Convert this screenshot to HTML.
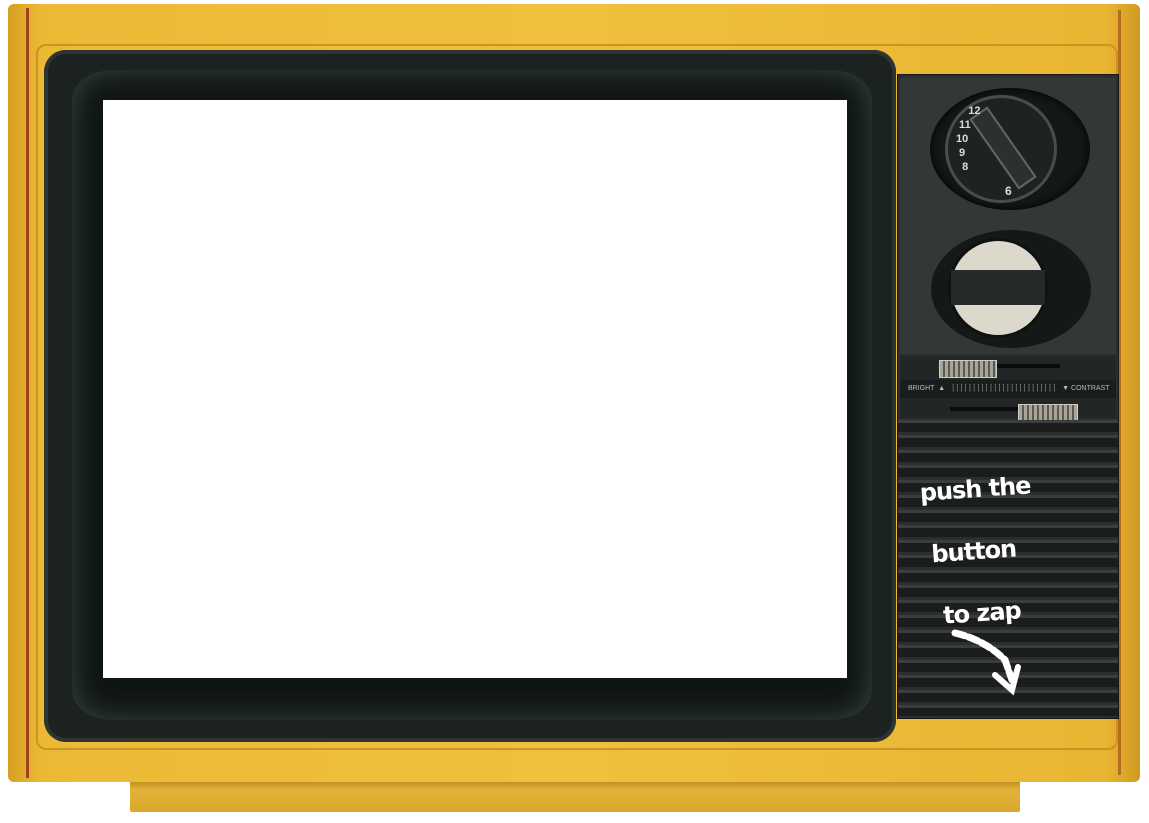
<!DOCTYPE html>
<html><head><style>
body{margin:0;width:1149px;height:823px;background:#fff;position:relative;overflow:hidden;font-family:"Liberation Sans",sans-serif}
div{position:absolute;box-sizing:border-box}
</style></head><body>
<div style="left:130px;top:780px;width:890px;height:32px;background:linear-gradient(#b58a1e,#e2b237 30%,#d9a72c);border-radius:2px"></div>
<div style="left:8px;top:4px;width:1132px;height:778px;background:linear-gradient(90deg,#d89f22,#ecb935 3%,#f0c03c 50%,#e9b532 97%,#d19a22);border-radius:6px"></div>
<div style="left:26px;top:8px;width:3px;height:770px;background:#a0401c"></div>
<div style="left:1118px;top:10px;width:3px;height:765px;background:#b86a1e"></div>
<div style="left:36px;top:44px;width:1082px;height:706px;border:2px solid #c99520;border-radius:10px"></div>
<div style="left:44px;top:50px;width:852px;height:692px;background:#1b2220;border-radius:22px;box-shadow:inset 0 0 0 4px #2c3532"></div>
<div style="left:72px;top:70px;width:800px;height:650px;background:#0f1514;border-radius:40px/30px;box-shadow:inset 0 0 30px #3b4744"></div>
<div style="left:103px;top:100px;width:744px;height:578px;background:#fff"></div>
<div style="left:897px;top:74px;width:222px;height:645px;background:#2b2f2e;border:1px solid #151817"></div>
<div style="left:900px;top:78px;width:216px;height:276px;background:#333837"></div>
<div style="left:930px;top:88px;width:160px;height:122px;border-radius:50%;background:#141817;box-shadow:inset 0 0 10px #000"></div>
<div style="left:945px;top:95px;width:112px;height:108px;border-radius:50%;background:#1e2221;border:3px solid #4a4d48"></div>
<div style="left:992px;top:105px;width:22px;height:86px;background:#2c302f;transform:rotate(-35deg);border:2px solid #666"></div>
<div style="left:956px;top:104px;color:#ddd;font-size:11px;line-height:14px;font-weight:bold">&nbsp;&nbsp;&nbsp;&nbsp;12<br>&nbsp;11<br>10<br>&nbsp;9<br>&nbsp;&nbsp;8</div>
<div style="left:1005px;top:184px;color:#ddd;font-size:12px;font-weight:bold">6</div>
<div style="left:931px;top:230px;width:160px;height:118px;border-radius:50%;background:#141817"></div>
<div style="left:948px;top:238px;width:100px;height:100px;border-radius:50%;background:#ddd8cc;border:3px solid #0e1110"></div>
<div style="left:951px;top:270px;width:94px;height:35px;background:#262a2a"></div>
<div style="left:900px;top:356px;width:216px;height:62px;background:#222625"></div>
<div style="left:950px;top:364px;width:110px;height:4px;background:#0a0c0c"></div>
<div style="left:939px;top:360px;width:58px;height:18px;background:repeating-linear-gradient(90deg,#a8a496 0 3px,#5a5850 3px 5px);border:1px solid #ccc"></div>
<div style="left:900px;top:380px;width:216px;height:18px;background:#1a1d1d;color:#bbb;font-size:7px;line-height:18px;padding-left:8px;white-space:pre">BRIGHT  ▲   ┆┆┆┆┆┆┆┆┆┆┆┆┆┆┆┆┆┆┆┆┆┆┆┆┆   ▼ CONTRAST</div>
<div style="left:950px;top:407px;width:80px;height:4px;background:#0a0c0c"></div>
<div style="left:1018px;top:404px;width:60px;height:18px;background:repeating-linear-gradient(90deg,#a8a496 0 3px,#5a5850 3px 5px);border:1px solid #ccc"></div>
<div style="left:898px;top:420px;width:220px;height:296px;background:repeating-linear-gradient(#3a3e3d 0 3px,#1a1d1c 3px 12px,#2a2e2d 12px 15px)"></div>
<div style="left:924px;top:458px;color:#fff;font-family:'DejaVu Sans',sans-serif;font-weight:bold;font-size:24px;line-height:62px;transform:rotate(-4deg);letter-spacing:-1px">push the<br>&nbsp;button<br>&nbsp;&nbsp;to zap</div>
<svg style="position:absolute;left:950px;top:625px" width="80" height="75"><path d="M5 8 Q35 15 55 35 L62 55" stroke="#fff" stroke-width="7" fill="none" stroke-dasharray="10 4" stroke-linecap="round"/><path d="M45 50 L62 65 L68 42" stroke="#fff" stroke-width="6" fill="none" stroke-linecap="round"/></svg>
</body></html>
